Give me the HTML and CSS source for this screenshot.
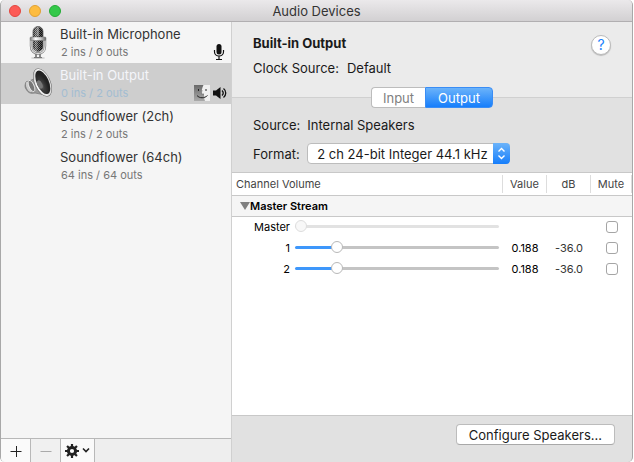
FILE: index.html
```html
<!DOCTYPE html>
<html lang="en">
<head>
<meta charset="utf-8">
<title>Audio Devices</title>
<link rel="stylesheet" href="styles.css">
</head>
<body>
<div class="window">
  <header class="titlebar">
    <div class="lights">
      <button class="light close" aria-label="Close"></button>
      <button class="light minimize" aria-label="Minimize"></button>
      <button class="light expand" aria-label="Zoom"></button>
    </div>
    <h1>Audio Devices</h1>
  </header>
  <div class="body">
    <aside class="sidebar">
      <ul class="devices">
        <li class="device">
          <svg class="device-icon" viewBox="0 0 36 36" width="36" height="36" aria-hidden="true">
            <defs>
              <linearGradient id="chrome"><stop offset="0" stop-color="#777"/><stop offset=".35" stop-color="#fff"/><stop offset=".65" stop-color="#ccc"/><stop offset="1" stop-color="#666"/></linearGradient>
              <linearGradient id="shade"><stop offset="0" stop-color="#000" stop-opacity=".1"/><stop offset=".3" stop-color="#fff" stop-opacity=".3"/><stop offset=".6" stop-color="#000" stop-opacity=".2"/><stop offset="1" stop-color="#000" stop-opacity=".6"/></linearGradient>
              <pattern id="mesh" width="2" height="2" patternUnits="userSpaceOnUse"><rect width="2" height="2" fill="#1c1c1c"/><rect width="1" height="1" fill="#999"/><rect x="1" y="1" width="1" height="1" fill="#888"/></pattern>
            </defs>
            <ellipse cx="19" cy="33" rx="7" ry="1" fill="#ccc"/>
            <path d="M16 27h2v6h-2zM20 27h2v6h-2z" fill="#888"/>
            <path d="M15 32.500h8" stroke="#777"/>
            <rect x="14" y="1.500" width="10" height="25" rx="5" fill="url(#mesh)"/>
            <rect x="14" y="1.500" width="10" height="25" rx="5" fill="url(#shade)" stroke="#666" stroke-width=".8"/>
            <path d="M19 2v9" stroke="#ddd" stroke-width=".8"/>
            <path d="M12 15v6c0 5 3 7.500 7 7.500s7-2.500 7-7.500v-6" fill="none" stroke="#777" stroke-width="2.400"/>
            <path d="M12 15v6c0 5 3 7.500 7 7.500s7-2.500 7-7.500v-6" fill="none" stroke="#e2e2e2" stroke-width="1.200"/>
            <rect x="11" y="12" width="16" height="3.500" rx="1" fill="url(#chrome)" stroke="#777" stroke-width=".5"/>
          </svg>
          <div class="device-text"><div class="device-name">Built-in Microphone</div><div class="device-info">2 ins / 0 outs</div></div>
          <div class="badges">
            <svg viewBox="0 0 12 18" width="12" height="18" aria-label="Default input"><rect x="3.500" y="1" width="5" height="10.500" rx="2.500" fill="#111"/><path d="M1.500 7v2a4.500 4 0 0 0 9 0V7M6 13v3M3 16.500h6" fill="none" stroke="#111" stroke-width="1.200"/></svg>
          </div>
        </li>
        <li class="device selected">
          <svg class="device-icon" viewBox="0 0 36 36" width="36" height="36" aria-hidden="true">
            <defs>
              <linearGradient id="rim" x2="1" y2="1"><stop offset="0" stop-color="#999"/><stop offset=".3" stop-color="#fff"/><stop offset="1" stop-color="#d0d0d0"/></linearGradient>
              <radialGradient id="cone" cx=".3" cy=".6"><stop offset="0" stop-color="#666"/><stop offset=".4" stop-color="#3c3c3c"/><stop offset="1" stop-color="#222"/></radialGradient>
            </defs>
            <path d="M17 12 10 15c-4 2-5 5-3 8 2 4 5 5 9 4l10 2z" fill="#999" stroke="#777" stroke-width=".7"/>
            <ellipse cx="10" cy="21" rx="3" ry="6" transform="rotate(-24 10 21)" fill="#ccc" stroke="#777" stroke-width=".7"/>
            <ellipse cx="12.500" cy="20" rx="2.500" ry="6" transform="rotate(-24 12.500 20)" fill="#777" stroke="#eee" stroke-width=".8"/>
            <ellipse cx="23.500" cy="16.500" rx="8" ry="15" transform="rotate(-24 23.500 16.500)" fill="#666"/>
            <ellipse cx="23.500" cy="16.500" rx="7.500" ry="14.400" transform="rotate(-24 23.500 16.500)" fill="url(#rim)"/>
            <ellipse cx="23.800" cy="16.300" rx="6" ry="12.600" transform="rotate(-24 23.800 16.300)" fill="url(#cone)"/>
            <ellipse cx="20.800" cy="18.500" rx="2.400" ry="4.500" transform="rotate(-24 20.800 18.500)" fill="#777"/>
          </svg>
          <div class="device-text"><div class="device-name">Built-in Output</div><div class="device-info">0 ins / 2 outs</div></div>
          <div class="badges">
            <svg viewBox="0 0 16 16" width="16" height="16" aria-label="System sounds">
              <defs><linearGradient id="face" x2="0" y2="1"><stop offset="0" stop-color="#6a6a6a"/><stop offset="1" stop-color="#aaa"/></linearGradient></defs>
              <path d="M0 0h16v16H0z" fill="#f0f0f0"/><path d="M0 0h9.500C8 3 7.500 6 7.500 9H10c0 3 .3 5 1 7H0z" fill="url(#face)"/>
              <path d="M4.500 4v2M12 4v2M3 10.500c2.500 3 7.500 3 10.500 0" fill="none" stroke="#222"/>
              <path d="M8 5c-.4 1.500-.5 3-.5 4H10" fill="none" stroke="#666" stroke-width=".6"/>
            </svg>
            <svg viewBox="0 0 15 16" width="15" height="16" aria-label="Default output"><path d="M0 5.500h3L7.500 2v12L3 10.500H0z" fill="#111"/><path d="M9 5.500c1.500 1.500 1.500 3.500 0 5M10.500 3.500c3 2.500 3 6.500 0 9" fill="none" stroke="#111" stroke-width="1.300"/></svg>
          </div>
        </li>
        <li class="device">
          <span class="device-icon"></span>
          <div class="device-text"><div class="device-name">Soundflower (2ch)</div><div class="device-info">2 ins / 2 outs</div></div>
        </li>
        <li class="device">
          <span class="device-icon"></span>
          <div class="device-text"><div class="device-name">Soundflower (64ch)</div><div class="device-info">64 ins / 64 outs</div></div>
        </li>
      </ul>
      <div class="toolbar">
        <button class="tool" aria-label="Add device"><svg viewBox="0 0 12 12" width="12" height="12"><path d="M.500 6.500h11M6.500 1v11" stroke="#222" fill="none"/></svg></button>
        <button class="tool off" disabled aria-label="Remove device"><svg viewBox="0 0 12 12" width="12" height="12"><path d="M.500 6.500h11" stroke="#aaa" fill="none"/></svg></button>
        <button class="tool gear" aria-label="Actions">
          <svg viewBox="0 0 14 14" width="14" height="14"><circle cx="7" cy="7" r="3.600" fill="none" stroke="#222" stroke-width="3"/><path d="M7 0v3M7 11v3M0 7h3M11 7h3M2.050 2.050l2 2M9.950 9.950l2 2M2.050 11.950l2-2M9.950 4.050l2-2" stroke="#222" stroke-width="2.200"/></svg>
          <svg viewBox="0 0 8 14" width="8" height="14"><path d="m1 4.500 3 3 3-3" fill="none" stroke="#222" stroke-width="1.600"/></svg>
        </button>
      </div>
    </aside>
    <main class="main">
      <section class="summary">
        <div>
          <h2>Built-in Output</h2>
          <p class="clock"><span>Clock Source:</span><span>Default</span></p>
        </div>
        <button class="help" aria-label="Help">?</button>
      </section>
      <div class="tabs">
        <button class="tab">Input</button><button class="tab active">Output</button>
      </div>
      <div class="settings">
        <span>Source:</span><span class="source">Internal Speakers</span>
        <label for="format">Format:</label>
        <span class="popup">
          <select id="format"><option>2 ch 24-bit Integer 44.1 kHz</option></select>
          <svg class="stepper" viewBox="0 0 17 20" width="17" height="20" aria-hidden="true"><path d="m5.500 8 3-3 3 3M5.500 12l3 3 3-3" fill="none" stroke="#fff" stroke-width="1.400"/></svg>
        </span>
      </div>
      <div class="channels">
        <table>
          <colgroup><col class="c-label"><col><col class="c-value"><col class="c-value"><col class="c-mute"></colgroup>
          <thead>
            <tr><th colspan="2" class="first"><span>Channel Volume</span></th><th><span>Value</span></th><th><span>dB</span></th><th><span>Mute</span></th></tr>
          </thead>
          <tbody>
            <tr class="group"><th colspan="5"><span class="triangle"></span>Master Stream</th></tr>
            <tr>
              <td class="label"><label for="v0">Master</label></td>
              <td class="slide"><input id="v0" type="range" min="0" max="1" step="any" value="0" disabled></td>
              <td></td><td></td>
              <td class="mute"><input type="checkbox" aria-label="Mute master"></td>
            </tr>
            <tr>
              <td class="label"><label for="v1">1</label></td>
              <td class="slide"><input id="v1" type="range" min="0" max="1" step="any" value="0.188" style="--fill:20%"></td>
              <td class="value">0.188</td><td class="db">-36.0</td>
              <td class="mute"><input type="checkbox" aria-label="Mute channel 1"></td>
            </tr>
            <tr>
              <td class="label"><label for="v2">2</label></td>
              <td class="slide"><input id="v2" type="range" min="0" max="1" step="any" value="0.188" style="--fill:20%"></td>
              <td class="value">0.188</td><td class="db">-36.0</td>
              <td class="mute"><input type="checkbox" aria-label="Mute channel 2"></td>
            </tr>
          </tbody>
        </table>
      </div>
      <footer class="actions"><button class="configure">Configure Speakers...</button></footer>
    </main>
  </div>
</div>
</body>
</html>
```

FILE: styles.css
```css
* { box-sizing: border-box; }
body {
  margin: 0;
  background: #fff;
  color: #1a1a1a;
  font: 13px/16px Inter, "Liberation Sans", sans-serif;
}
button, select, input { font: inherit; color: inherit; margin: 0; padding: 0; }
h1, h2, p, ul { margin: 0; padding: 0; font-size: 13px; }
svg { display: block; }

.window {
  display: flex;
  flex-direction: column;
  height: 100vh;
  margin-right: 1px;
  border: solid #a8a8a8;
  border-width: 0 1px;
  border-radius: 5px;
  overflow: hidden;
  background: #e1e1e1;
}

.titlebar {
  display: grid;
  grid-template-columns: 1fr auto 1fr;
  align-items: center;
  height: 22px;
  background: linear-gradient(#ebe9eb, #d2d0d2);
  border-bottom: 1px solid #b1afb1;
}
.titlebar h1 { font-weight: 400; color: #333; padding-top: 1px; }
.lights { display: flex; gap: 8px; padding-left: 8px; }
.light { width: 12px; height: 12px; border: 1px solid; border-radius: 50%; }
.close { background: #fc5b57; border-color: #e2463f; }
.minimize { background: #fdbc40; border-color: #e0a033; }
.expand { background: #34c84a; border-color: #24ab36; }

.body { flex: 1; display: grid; grid-template-columns: minmax(180px, 231px) 1fr; min-height: 0; }
.sidebar {
  display: flex;
  flex-direction: column;
  background: #f5f5f5;
  border-right: 1px solid #d0d0d0;
}
.devices { flex: 1; list-style: none; }
.device { display: flex; height: 41px; padding: 3px 3px 2px 18px; }
.device-icon { flex: none; width: 36px; height: 36px; margin-right: 5px; }
.device-text { flex: 1; white-space: nowrap; }
.device-name { line-height: 19px; color: #333; }
.device-info { font-size: 11px; line-height: 16px; color: #777; padding-left: 1px; }
.selected { background: #cecece; }
.selected .device-name { color: #f4f5fa; }
.selected .device-info { color: #a3bdd2; }
.badges { display: flex; gap: 3px; align-items: center; align-self: flex-end; height: 18px; }
.device:not(.selected) .badges { padding-right: 3px; }

.toolbar { display: flex; height: 24px; background: #eee; border-top: 1px solid #b8b8b8; }
.tool {
  display: flex;
  align-items: center;
  justify-content: center;
  width: 30px;
  border: 0;
  border-right: 1px solid #b8b8b8;
  background: #fafafa;
}
.off { background: #f0f0f0; }
.gear { width: 34px; gap: 3px; }

.main { display: flex; flex-direction: column; min-width: 0; }
.summary {
  display: flex;
  justify-content: space-between;
  height: 76px;
  padding: 13px 21px 0;
  background: #ebebeb;
  border-bottom: 1px solid #d0d0d0;
}
.summary h2 { font-weight: 700; line-height: 17px; }
.clock { display: flex; gap: 8px; margin-top: 8px; }
.help {
  width: 20px;
  height: 20px;
  border: 1px solid #bbb;
  border-radius: 50%;
  background: #fff;
  color: #1a82fb;
  font-size: 14px;
  line-height: 16px;
  box-shadow: 0 1px 1px #bbb;
}

.tabs { display: flex; align-self: center; margin-top: -11px; }
.tab {
  width: 54px;
  height: 21px;
  border: 1px solid #bcbcbc;
  border-right: 0;
  border-radius: 4px 0 0 4px;
  background: #fff;
  color: #808080;
}
.tab.active {
  width: 68px;
  border: 1px solid #3a8df5;
  border-radius: 0 4px 4px 0;
  background: linear-gradient(#6bb3fa, #167efb);
  color: #fff;
}

.settings {
  display: grid;
  grid-template-columns: auto 1fr;
  grid-template-rows: 16px 21px;
  gap: 10px 7px;
  align-items: center;
  padding: 9px 21px 8px;
}
.popup { position: relative; justify-self: start; display: flex; }
.popup select {
  appearance: none;
  width: 203px;
  height: 21px;
  padding-left: 9px;
  border: 1px solid #bcbcbc;
  border-radius: 4px;
  background: #fff;
}
.stepper {
  position: absolute;
  top: 0;
  right: 0;
  height: 21px;
  border-radius: 0 4px 4px 0;
  background: linear-gradient(#6bb3fa, #167efb);
  pointer-events: none;
}

.channels { flex: 1; background: #fff; border: solid #c8c8c8; border-width: 1px 0; }
table { width: 100%; table-layout: fixed; border-collapse: collapse; font-size: 11px; }
.c-label { width: 58px; }
.c-value { width: 44px; }
.c-mute { width: 41px; }
td, th { padding: 0; height: 21px; font-weight: 400; text-align: center; }
thead th { height: 22px; color: #444; border-bottom: 1px solid #c8c8c8; }
thead th span { display: block; border-right: 1px solid #ddd; line-height: 18px; }
thead th.first { text-align: left; }
thead th.first span { padding-left: 4px; }
.group th {
  height: 21px;
  padding-left: 8px;
  text-align: left;
  font-weight: 600;
  color: #000;
  background: #f5f5f5;
  border-bottom: 1px solid #c8c8c8;
}
.triangle {
  display: inline-block;
  border: solid transparent;
  border-width: 8px 5px 0;
  border-top-color: #808080;
}
td.label { text-align: right; color: #000; }
td.slide { padding: 0 4px 0 5px; }
td.value { color: #000; }
td.db { color: #333; }

input[type="range"] {
  appearance: none;
  display: block;
  width: 100%;
  height: 14px;
  background: transparent;
}
input[type="range"]::-webkit-slider-runnable-track {
  height: 3px;
  border-radius: 2px;
  background: linear-gradient(to right, #3e97fb var(--fill, 0%), #c4c4c4 var(--fill, 0%));
}
input[type="range"]::-webkit-slider-thumb {
  appearance: none;
  width: 12px;
  height: 12px;
  margin-top: -5px;
  border: 1px solid #b8b8b8;
  border-radius: 50%;
  background: #fff;
}
input[type="range"]:disabled::-webkit-slider-runnable-track { background: #e2e2e2; }
input[type="range"]:disabled::-webkit-slider-thumb { border-color: #ddd; background: #f8f8f8; }
input[type="checkbox"] {
  appearance: none;
  display: block;
  width: 12px;
  height: 12px;
  margin: 0 auto;
  border: 1px solid #a5a5a5;
  border-radius: 3px;
  background: #fff;
}

.actions { display: flex; justify-content: flex-end; height: 46px; padding: 8px 17px; }
.configure {
  height: 21px;
  padding: 0 12px;
  border: 1px solid #bcbcbc;
  border-bottom-color: #a8a8a8;
  border-radius: 4px;
  background: #fff;
}
```
